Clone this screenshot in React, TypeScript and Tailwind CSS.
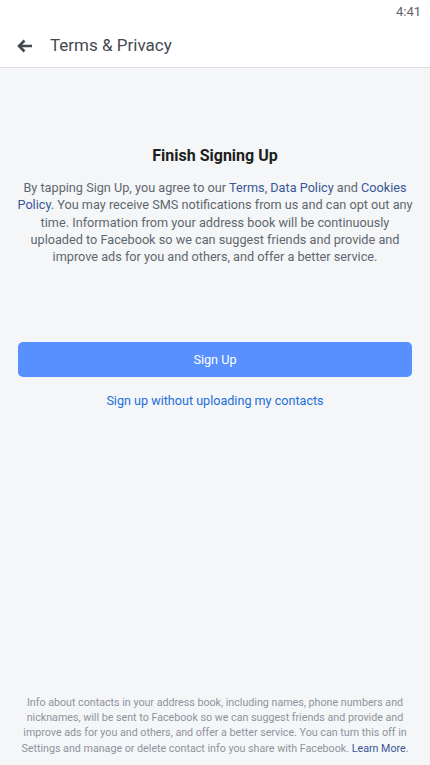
import React from 'react';

const font = { fontFamily: 'Roboto, "Liberation Sans", sans-serif' };

const App = () => {
    return (
        <div className="w-[430px] h-[765px] bg-[#f5f6f7] flex flex-col" style={font}>
            {/* Status bar + toolbar */}
            <div className="bg-white border-b border-[#dadde1]">
                <div className="h-[24px] flex items-center justify-end pr-[9px] text-[13px] text-[#5f6368]">4:41</div>
                <div className="h-[43px] flex items-center pl-[17px]">
                    <svg width="16" height="14" viewBox="0 0 16 14" className="text-[#444950]">
                        <path d="M15 7H2.5M7.5 1.5 2 7l5.5 5.5" stroke="currentColor" strokeWidth="2.6" fill="none" />
                    </svg>
                    <span className="ml-[17px] text-[17px] text-[#444950]">Terms &amp; Privacy</span>
                </div>
            </div>

            {/* Main content */}
            <div className="flex-1 flex flex-col px-[18px]">
                <h1 className="mt-[77px] text-center text-[16px] font-bold text-[#1c1e21] leading-[22px]">Finish Signing Up</h1>
                <p className="mt-[12px] w-[399px] self-center text-center text-[12.7px] leading-[17.3px] text-[#606770]">
                    By tapping Sign Up, you agree to our <span className="text-[#385898]">Terms</span>, <span className="text-[#385898]">Data Policy</span> and <span className="text-[#385898]">Cookies Policy</span>. You may receive SMS notifications from us and can opt out any time. Information from your address book will be continuously uploaded to Facebook so we can suggest friends and provide and improve ads for you and others, and offer a better service.
                </p>
                <button className="mt-[77px] h-[35px] w-full rounded-[5px] bg-[#5890ff] text-white text-[12.7px]">Sign Up</button>
                <a className="mt-[15px] text-center text-[12.6px] text-[#216fdb]">Sign up without uploading my contacts</a>

                <div className="flex-1" />
                <p className="mb-[9px] text-center text-[10.7px] leading-[15.3px] text-[#8d949e]">
                    Info about contacts in your address book, including names, phone numbers and nicknames, will be sent to Facebook so we can suggest friends and provide and improve ads for you and others, and offer a better service. You can turn this off in Settings and manage or delete contact info you share with Facebook. <span className="text-[#385898]">Learn More</span>.
                </p>
            </div>
        </div>
    );
};

export default App;
